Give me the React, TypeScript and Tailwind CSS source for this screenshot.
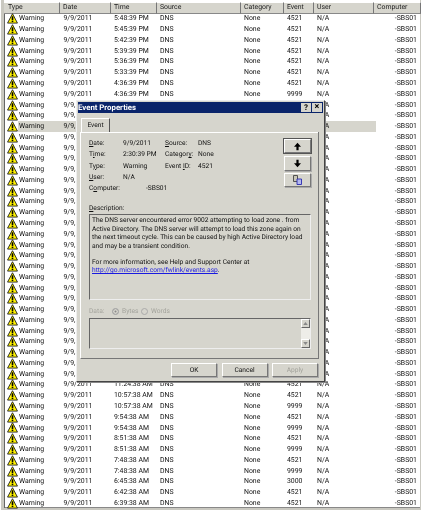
interface LogRow {
  time: string;
  event: string;
  covered?: boolean;
  selected?: boolean;
}

const topRows = [
  ['5:48:39 PM', '4521'],
  ['5:45:39 PM', '4521'],
  ['5:42:39 PM', '4521'],
  ['5:39:39 PM', '4521'],
  ['5:36:39 PM', '4521'],
  ['5:33:39 PM', '4521'],
  ['4:36:39 PM', '4521'],
  ['4:36:39 PM', '9999'],
];

const bottomRows = [
  ['11:24:38 AM', '4521'],
  ['10:57:38 AM', '4521'],
  ['10:57:38 AM', '9999'],
  ['9:54:38 AM', '4521'],
  ['9:54:38 AM', '9999'],
  ['8:51:38 AM', '4521'],
  ['8:51:38 AM', '9999'],
  ['7:48:38 AM', '4521'],
  ['7:48:38 AM', '9999'],
  ['6:45:38 AM', '3000'],
  ['6:42:38 AM', '4521'],
  ['6:39:38 AM', '4521'],
];

// the 26 rows in between sit behind the dialog, only their ends show
const rows: LogRow[] = [
  ...topRows.map(([time, event]) => ({ time, event })),
  ...Array.from({ length: 26 }, (_, i) => ({ time: '', event: '', covered: true, selected: i === 2 })),
  ...bottomRows.map(([time, event]) => ({ time, event })),
];

const columns = [
  { label: 'Type', width: 'w-[56px] pl-[4px]' },
  { label: 'Date', width: 'w-[51px] pl-[3px]' },
  { label: 'Time', width: 'w-[46px] pl-[3px]' },
  { label: 'Source', width: 'w-[84px] pl-[3px]' },
  { label: 'Category', width: 'w-[43px] pl-[3px]' },
  { label: 'Event', width: 'w-[30px] pl-[3px]' },
  { label: 'User', width: 'w-[60px] pl-[3px]' },
  { label: 'Computer', width: 'w-[47px] pl-[3px]' },
];

function WarningIcon({ className }: { className?: string }) {
  return (
    <svg viewBox="0 0 12 12" className={className}>
      <path d="M6 .8 11.4 11H.6Z" fill="#fff200" stroke="#222" strokeWidth="1" strokeLinejoin="round" />
      <path d="M6 3.6v4" stroke="#000" strokeWidth="1.8" />
      <path d="M6 8.3v1.6" stroke="#000" strokeWidth="1.8" />
    </svg>
  );
}

function Win2kButton({ children, className = '' }: { children: React.ReactNode; className?: string }) {
  return (
    <div
      className={`flex items-center justify-center border border-t-white border-l-white border-r-[#777] border-b-[#777] bg-[#d6d5cd] shadow-[1px_1px_0_#aaa] ${className}`}
    >
      {children}
    </div>
  );
}

function EventDialog() {
  return (
    <div className="absolute left-[76px] top-[100px] flex h-[282px] w-[249px] flex-col border border-t-[#eee] border-l-[#eee] border-r-[#444] border-b-[#444] bg-[#d6d5cd] p-px text-[6.65px] leading-[11px] text-[#111] shadow-[1px_1px_0_#888]">
      <div className="flex h-[11px] shrink-0 items-center justify-between bg-[#0a246a] pr-px">
        <span className="text-[7.8px] font-bold text-white">Event Properties</span>
        <div className="flex gap-px">
          <div className="flex h-[9px] w-[10px] items-center justify-center bg-[#d6d5cd] text-[8px] font-bold leading-none text-black">?</div>
          <div className="flex h-[9px] w-[10px] items-center justify-center bg-[#d6d5cd] text-[9px] font-bold leading-none text-black">×</div>
        </div>
      </div>

      <div className="ml-[3px] mt-[5px] flex">
        <div className="flex h-[14px] w-[29px] items-center justify-center border border-b-0 border-t-white border-l-white border-r-[#555] bg-[#d6d5cd]">
          Event
        </div>
      </div>

      <div className="ml-[2px] mr-[4px] flex h-[227px] shrink-0 flex-col border border-t-0 border-l-white border-r-[#777] border-b-[#777] pl-[8px] pr-[7px] pt-[6px] shadow-[inset_0_1px_0_#fff]">
        <div className="flex justify-between">
          <div className="grid h-[56.5px] grid-cols-[34px_42px_33px_30px] auto-rows-[11.3px] leading-[11.3px]">
            <span><u>D</u>ate:</span><span>9/9/2011</span><span><u>S</u>ource:</span><span>DNS</span>
            <span>T<u>i</u>me:</span><span className="whitespace-nowrap">2:30:39 PM</span><span>Categor<u>y</u>:</span><span>None</span>
            <span>T<u>y</u>pe:</span><span>Warning</span><span className="whitespace-nowrap">Event <u>I</u>D:</span><span>4521</span>
            <span><u>U</u>ser:</span><span className="col-span-3">N/A</span>
            <span className="whitespace-nowrap">C<u>o</u>mputer:</span><span className="col-span-3 pl-[23px]">-SBS01</span>
          </div>
          <div className="mt-px flex flex-col gap-[2.5px]">
            <Win2kButton className="h-[14px] w-[27px] outline outline-[#555]">
              <svg viewBox="0 0 9 9" className="h-[9px] w-[9px]"><path d="M4.5 .8 8 4.8H5.6V8.2H3.4V4.8H1Z" fill="#000" /></svg>
            </Win2kButton>
            <Win2kButton className="h-[15px] w-[27px]">
              <svg viewBox="0 0 9 9" className="h-[9px] w-[9px]"><path d="M4.5 8.2 8 4.2H5.6V.8H3.4V4.2H1Z" fill="#000" /></svg>
            </Win2kButton>
            <Win2kButton className="h-[14px] w-[27px]">
              <svg viewBox="0 0 11 10" className="h-[10px] w-[11px]">
                <path d="M1.5 .5H5.5V6.5H1.5Z" fill="#c8c6b8" stroke="#444" strokeWidth="0.9" />
                <path d="M5 4H9.5V9.5H5Z" fill="#b4b8ee" stroke="#2a2ab0" strokeWidth="0.9" />
              </svg>
            </Win2kButton>
          </div>
        </div>

        <div className="mt-[8px]"><u>D</u>escription:</div>
        <div className="mt-[0.5px] h-[86px] whitespace-nowrap border border-t-[#666] border-l-[#666] border-r-[#eee] border-b-[#eee] pl-[2px] pt-px leading-[8.6px]">
          <p>The DNS server encountered error 9002 attempting to load zone . from</p>
          <p>Active Directory. The DNS server will attempt to load this zone again on</p>
          <p>the next timeout cycle. This can be caused by high Active Directory load</p>
          <p>and may be a transient condition.</p>
          <p className="mt-[7.5px]">For more information, see Help and Support Center at</p>
          <p><a className="text-[#1a1ae0] underline">http://go.microsoft.com/fwlink/events.asp</a>.</p>
        </div>

        <div className="mt-[6px] flex h-[11px] items-center text-[#a3a39c]">
          <span className="w-[23px]">Data:</span>
          <span className="mr-[3px] h-[7px] w-[7px] rounded-full border border-[#aaa] bg-[#888] shadow-[inset_0_0_0_1.5px_#d6d5cd]" />
          <span className="w-[19px]">Bytes</span>
          <span className="mr-[3px] h-[7px] w-[7px] rounded-full border border-[#aaa]" />
          <span>Words</span>
        </div>
        <div className="mt-px flex h-[31px] justify-end border border-t-[#666] border-l-[#666] border-r-[#eee] border-b-[#eee]">
          <div className="flex w-[9px] flex-col justify-between bg-[#eeede8]">
            <div className="flex h-[9px] items-center justify-center border border-t-white border-l-white border-r-[#666] border-b-[#666] bg-[#d6d5cd]">
              <svg viewBox="0 0 6 4" className="h-[3px] w-[5px]"><path d="M3 0 6 4H0Z" fill="#888" /></svg>
            </div>
            <div className="flex h-[9px] items-center justify-center border border-t-white border-l-white border-r-[#666] border-b-[#666] bg-[#d6d5cd]">
              <svg viewBox="0 0 6 4" className="h-[3px] w-[5px]"><path d="M3 4 6 0H0Z" fill="#888" /></svg>
            </div>
          </div>
        </div>
      </div>

      <div className="mt-[4px] flex justify-end gap-[4.5px] pr-[5px]">
        <Win2kButton className="h-[14px] w-[46px]">OK</Win2kButton>
        <Win2kButton className="h-[14px] w-[46px]">Cancel</Win2kButton>
        <Win2kButton className="h-[14px] w-[46px] text-[#a3a39c]">Apply</Win2kButton>
      </div>
    </div>
  );
}

export default function App() {
  return (
    <div className="relative h-[512px] w-[422px] overflow-hidden bg-white font-['Roboto',sans-serif] text-[6.9px] leading-none text-[#111] blur-[0.25px] [text-rendering:geometricPrecision]">
      <div className="ml-px mr-px flex h-[510px] flex-col border-b-2 border-l-[3px] border-r border-[#c9c8c0] bg-white shadow-[inset_1px_0_0_#666,inset_0_-1px_0_#888]">
        <div className="h-[2px] shrink-0 bg-[#fff]" />
        <div className="flex h-[11.5px] shrink-0">
          {columns.map((col) => (
            <div
              key={col.label}
              className={`${col.width} flex shrink-0 items-center border-y border-r border-t-white border-r-[#777] border-b-[#888] bg-[#d6d5cd] text-[#222]`}
            >
              {col.label}
            </div>
          ))}
        </div>
        <div className="flex flex-col">
          {rows.map((row, i) => (
            <div key={i} className="flex h-[10.77px] shrink-0 items-center whitespace-nowrap">
              <div className="flex h-full w-[56px] shrink-0 items-center pl-[3px]">
                <WarningIcon className="h-[11px] w-[11px] shrink-0" />
                <span className={`flex h-full grow items-center pl-px ${row.selected ? 'bg-[#d6d5cd]' : ''}`}>Warning</span>
              </div>
              <div className={`flex h-full items-center ${row.selected ? 'bg-[#d6d5cd]' : ''}`}>
                <span className="w-[51px] shrink-0 pl-[3.5px]">{row.covered ? '9/9,' : '9/9/2011'}</span>
                <span className="w-[46px] shrink-0 pl-[3px]">{row.time}</span>
                <span className="w-[84px] shrink-0 pl-[3px]">{row.covered ? '' : 'DNS'}</span>
                <span className="w-[43px] shrink-0 pl-[3px]">{row.covered ? '' : 'None'}</span>
                <span className="w-[30px] shrink-0 pl-[3px]">{row.event}</span>
                <span className="w-[62px] shrink-0 pl-[3px]">N/A</span>
              </div>
              <span className="w-[45px] shrink-0 pr-[4px] text-right">-SBS01</span>
            </div>
          ))}
        </div>
      </div>
      <EventDialog />
    </div>
  );
}
